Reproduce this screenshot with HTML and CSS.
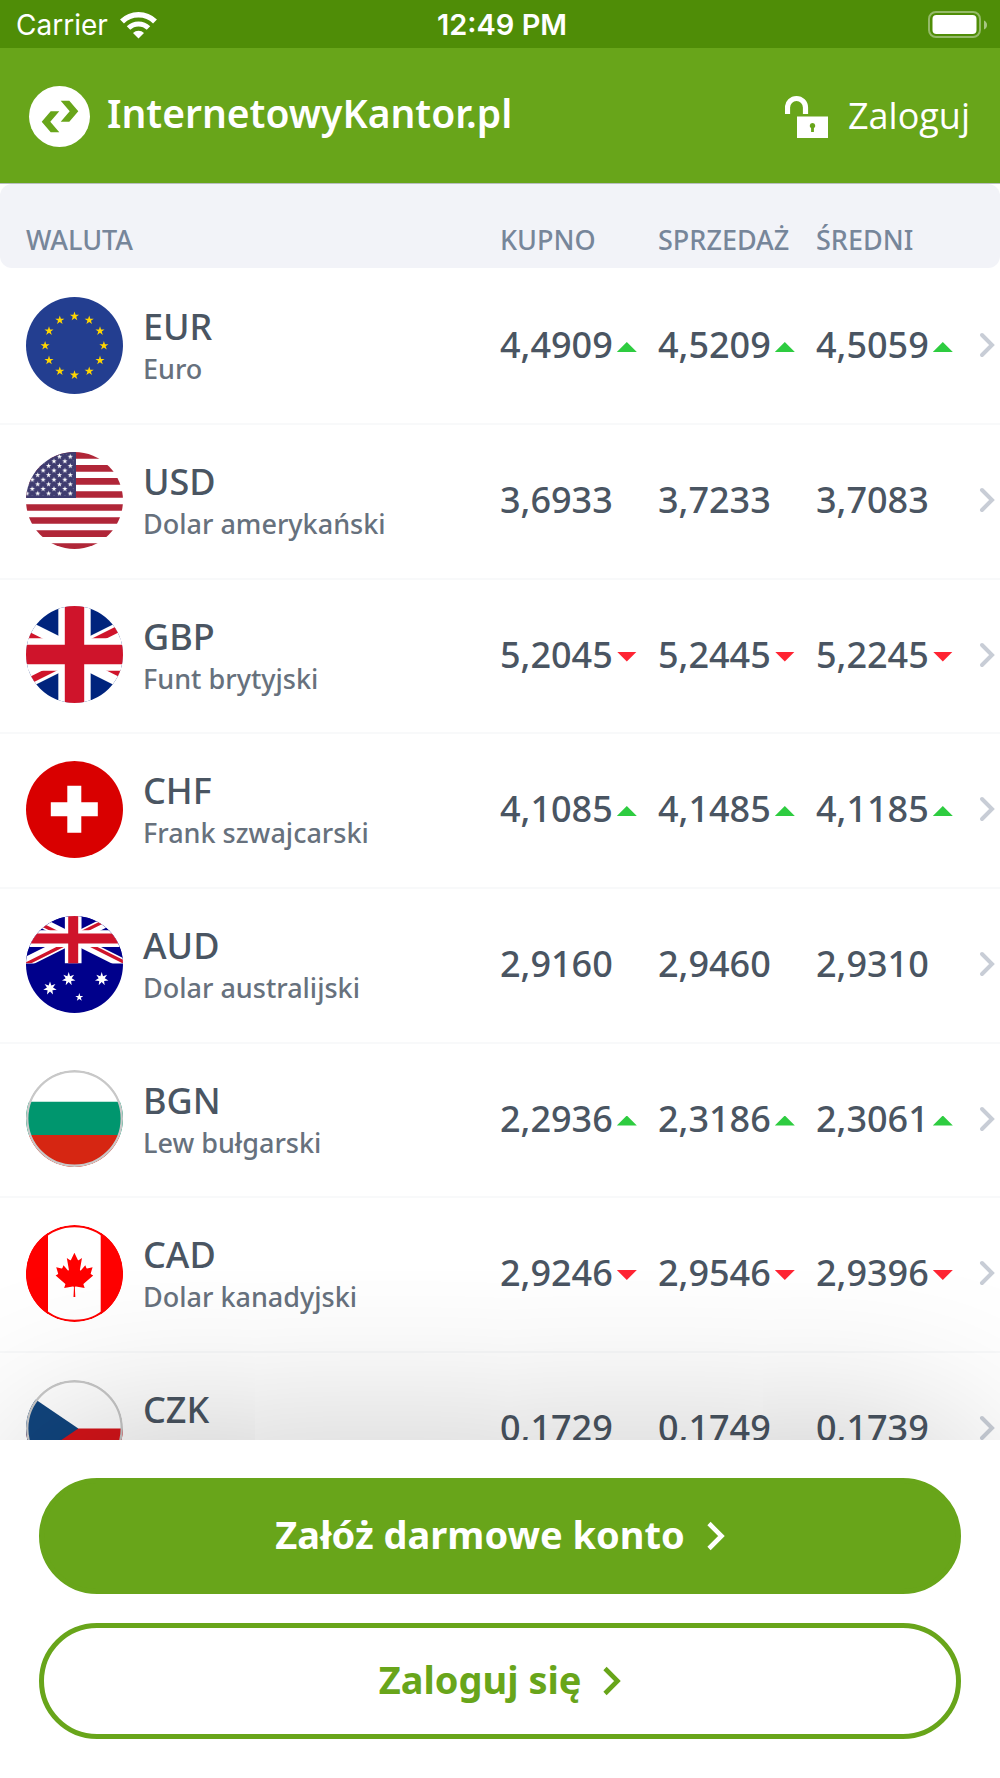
FILE: index.html
```html
<!DOCTYPE html>
<html lang="pl">
<head>
<meta charset="utf-8">
<meta name="viewport" content="width=device-width, initial-scale=1">
<title>InternetowyKantor.pl</title>
<link rel="stylesheet" href="styles.css">
</head>
<body>
<svg class="sprite" aria-hidden="true">
  <defs>
    <clipPath id="disc"><circle cx="48.500" cy="48.500" r="48.500"/></clipPath>
    <clipPath id="jack-quarters"><path d="M30 15h30v15zv15h-30zh-30v-15zv-15h30z"/></clipPath>
    <clipPath id="jack-box"><path d="M0 0h60v30H0z"/></clipPath>
    <path id="star5" d="M0-1 .225-.309 .951-.309 .363.118 .588.809 0 .382-.588.809-.363.118-.951-.309-.225-.309z"/>
    <path id="star7" d="M0-1 .195-.405 .782-.623 .439-.1 .975.223 .352.28 .434.901 0 .45-.434.901-.352.28-.975.223-.439-.1-.782-.623-.195-.405z"/>
    <pattern id="us-stars" patternUnits="userSpaceOnUse" x="38.87" y="0.07" width="10.86" height="9.2">
      <use href="#star5" fill="#fff" transform="translate(5.43 4.6) scale(2.8)"/>
      <use href="#star5" fill="#fff" transform="translate(0 0) scale(2.8)"/>
      <use href="#star5" fill="#fff" transform="translate(10.86 0) scale(2.8)"/>
      <use href="#star5" fill="#fff" transform="translate(0 9.2) scale(2.8)"/>
      <use href="#star5" fill="#fff" transform="translate(10.86 9.2) scale(2.8)"/>
    </pattern>
    <symbol id="jack" viewBox="0 0 60 30">
      <g clip-path="url(#jack-box)">
        <path d="M0 0h60v30H0z" fill="var(--jack-blue)"/>
        <path d="M0 0 60 30M60 0 0 30" stroke="#fff" stroke-width="6"/>
        <path d="M0 0 60 30M60 0 0 30" stroke="#cf142b" stroke-width="4" clip-path="url(#jack-quarters)"/>
        <path d="M30 0v30M0 15h60" stroke="#fff" stroke-width="10"/>
        <path d="M30 0v30M0 15h60" stroke="#cf142b" stroke-width="6"/>
      </g>
    </symbol>
    <symbol id="chevron" viewBox="0 0 16 26"><path d="M3 3l10 10L3 23" fill="none" stroke="currentColor" stroke-width="4" stroke-linecap="round" stroke-linejoin="miter"/></symbol>
    <symbol id="arrow" viewBox="0 0 18 30"><path d="M2 2.500l12.500 12.500L2 27.500" fill="none" stroke="currentColor" stroke-width="4.600"/></symbol>
  </defs>
</svg>

<div class="status">
  <div class="status-left">
    <span class="carrier">Carrier</span>
    <svg class="wifi" viewBox="0 0 37 28" fill="none" stroke="#fff">
      <path d="M2 10.500a23.500 23.500 0 0 1 33 0" stroke-width="5.500"/>
      <path d="M8.500 17a14.400 14.400 0 0 1 20 0" stroke-width="5"/>
      <path d="M18.500 27.500l-5.500-5.500a8 8 0 0 1 11 0z" fill="#fff" stroke="none"/>
    </svg>
  </div>
  <span class="clock">12:49 PM</span>
  <div class="status-right">
    <svg class="battery" viewBox="0 0 60 28">
      <rect x="1" y="1" width="51" height="25" rx="7" fill="none" stroke="#fff" stroke-opacity=".4" stroke-width="2"/>
      <rect x="4.500" y="4" width="44" height="19" rx="4" fill="#fff"/>
      <path d="M56 9.500q3 1.500 3 4.500t-3 4.500z" fill="#fff" fill-opacity=".5"/>
    </svg>
  </div>
</div>

<header class="header">
  <a class="brand" href="#">
    <svg class="brand-mark" viewBox="0 0 61 61">
      <circle cx="30.500" cy="30.500" r="30.500" fill="#fff"/>
      <path d="M31.700 14.700h8.600l9 10.500-9 10.500h-8.600l9-10.500zM30.300 25.300h-8.600L12.700 35.800l9 10.500h8.600l-9-10.500z" fill="#68a51a"/>
    </svg>
    <span class="brand-name">InternetowyKantor.pl</span>
  </a>
  <a class="login" href="#">
    <svg class="lock" viewBox="0 0 43 43">
      <path d="M2.500 19V12.500a9 9 0 0 1 18 0V19" fill="none" stroke="#fff" stroke-width="5.200"/>
      <path fill="#fff" fill-rule="evenodd" d="M12 21.500h31V43H12zM27.500 28a2.800 2.800 0 0 0-1.400 5.200V37h2.800v-3.800A2.800 2.800 0 0 0 27.500 28z"/>
    </svg>
    <span>Zaloguj</span>
  </a>
</header>

<main class="rates-panel">
  <table class="rates">
    <thead>
      <tr><th class="name-col" scope="col">WALUTA</th><th class="rate-col" scope="col">KUPNO</th><th class="rate-col" scope="col">SPRZEDAŻ</th><th class="rate-col" scope="col">ŚREDNI</th><th class="more-col"></th></tr>
    </thead>
    <tbody>
      <tr>
        <td><div class="currency">
          <svg class="flag" viewBox="0 0 97 97">
            <circle cx="48.500" cy="48.500" r="48.500" fill="#233e90"/>
            <g fill="#ffd500">
              <use href="#star5" transform="translate(48.500 19.300) scale(4.800)"/><use href="#star5" transform="translate(63.200 23.200) scale(4.800)"/>
              <use href="#star5" transform="translate(74 34) scale(4.800)"/><use href="#star5" transform="translate(77.900 48.700) scale(4.800)"/>
              <use href="#star5" transform="translate(74 63.400) scale(4.800)"/><use href="#star5" transform="translate(63.200 74.200) scale(4.800)"/>
              <use href="#star5" transform="translate(48.500 78.100) scale(4.800)"/><use href="#star5" transform="translate(33.800 74.200) scale(4.800)"/>
              <use href="#star5" transform="translate(23 63.400) scale(4.800)"/><use href="#star5" transform="translate(19.100 48.700) scale(4.800)"/>
              <use href="#star5" transform="translate(23 34) scale(4.800)"/><use href="#star5" transform="translate(33.800 23.200) scale(4.800)"/>
            </g>
          </svg>
          <div class="label"><div class="code">EUR</div><div class="name">Euro</div></div>
        </div></td>
        <td><span class="rate up">4,4909</span></td><td><span class="rate up">4,5209</span></td><td><span class="rate up">4,5059</span></td>
        <td><svg class="more"><use href="#chevron"/></svg></td>
      </tr>
      <tr>
        <td><div class="currency">
          <svg class="flag" viewBox="0 0 97 97"><g clip-path="url(#disc)">
            <path d="M0 0h97v97H0z" fill="#fff"/>
            <path d="M0 3.300h97M0 16.300h97M0 29.300h97M0 42.500h97M0 55.500h97M0 68.500h97M0 81.600h97M0 94.700h97" stroke="#b02638" stroke-width="6.700"/>
            <path d="M0 0h50v46H0z" fill="#3f3c70"/>
            <path d="M0 2h47.500v42H0z" fill="url(#us-stars)"/>
          </g></svg>
          <div class="label"><div class="code">USD</div><div class="name">Dolar amerykański</div></div>
        </div></td>
        <td><span class="rate">3,6933</span></td><td><span class="rate">3,7233</span></td><td><span class="rate">3,7083</span></td>
        <td><svg class="more"><use href="#chevron"/></svg></td>
      </tr>
      <tr>
        <td><div class="currency">
          <svg class="flag jack-gb" viewBox="0 0 97 97"><g clip-path="url(#disc)"><use href="#jack" x="-48.500" y="0" width="194" height="97"/></g></svg>
          <div class="label"><div class="code">GBP</div><div class="name">Funt brytyjski</div></div>
        </div></td>
        <td><span class="rate down">5,2045</span></td><td><span class="rate down">5,2445</span></td><td><span class="rate down">5,2245</span></td>
        <td><svg class="more"><use href="#chevron"/></svg></td>
      </tr>
      <tr>
        <td><div class="currency">
          <svg class="flag" viewBox="0 0 97 97"><circle cx="48.500" cy="48.500" r="48.500" fill="#d90000"/><path d="M48.300 24.700v47M24.800 48.200h47" stroke="#fff" stroke-width="14"/></svg>
          <div class="label"><div class="code">CHF</div><div class="name">Frank szwajcarski</div></div>
        </div></td>
        <td><span class="rate up">4,1085</span></td><td><span class="rate up">4,1485</span></td><td><span class="rate up">4,1185</span></td>
        <td><svg class="more"><use href="#chevron"/></svg></td>
      </tr>
      <tr>
        <td><div class="currency">
          <svg class="flag jack-au" viewBox="0 0 97 97"><g clip-path="url(#disc)">
            <path d="M0 0h97v97H0z" fill="#00008b"/>
            <use href="#jack" x="-2.800" y="-2.400" width="100" height="50"/>
            <g fill="#fff">
              <use href="#star7" transform="translate(24 72.300) scale(6.900)"/><use href="#star7" transform="translate(42.700 63) scale(6.900)"/>
              <use href="#star7" transform="translate(75.700 63) scale(6.900)"/><use href="#star5" transform="translate(53.300 81.300) scale(4.200)"/>
            </g>
          </g></svg>
          <div class="label"><div class="code">AUD</div><div class="name">Dolar australijski</div></div>
        </div></td>
        <td><span class="rate">2,9160</span></td><td><span class="rate">2,9460</span></td><td><span class="rate">2,9310</span></td>
        <td><svg class="more"><use href="#chevron"/></svg></td>
      </tr>
      <tr>
        <td><div class="currency">
          <svg class="flag" viewBox="0 0 97 97"><g clip-path="url(#disc)">
            <path d="M0 0h97v97H0z" fill="#fff"/><path d="M0 31.700h97V65H0z" fill="#00966e"/><path d="M0 65h97v32H0z" fill="#d62612"/>
            <circle cx="48.500" cy="48.500" r="47.300" fill="none" stroke="#c8c8c8" stroke-width="2.400"/>
          </g></svg>
          <div class="label"><div class="code">BGN</div><div class="name">Lew bułgarski</div></div>
        </div></td>
        <td><span class="rate up">2,2936</span></td><td><span class="rate up">2,3186</span></td><td><span class="rate up">2,3061</span></td>
        <td><svg class="more"><use href="#chevron"/></svg></td>
      </tr>
      <tr>
        <td><div class="currency">
          <svg class="flag" viewBox="0 0 97 97"><g clip-path="url(#disc)">
            <path d="M0 0h97v97H0z" fill="#fff"/><path d="M0 0h22v97H0zM74.700 0H97v97H74.700z" fill="#f00"/>
            <circle cx="48.500" cy="48.500" r="47.400" fill="none" stroke="#f00" stroke-width="2.200"/>
            <path fill="#f00" transform="translate(48.400 49.700) scale(.0101 .011)" d="m-90 2030 45-863a95 95 0 0 0-111-98l-859 151 116-320a65 65 0 0 0-20-73l-941-762 212-99a65 65 0 0 0 34-79l-186-572 542 115a65 65 0 0 0 73-38l105-247 423 454a65 65 0 0 0 111-57l-204-1052 327 189a65 65 0 0 0 91-27l332-652 332 652a65 65 0 0 0 91 27l327-189-204 1052a65 65 0 0 0 111 57l423-454 105 247a65 65 0 0 0 73 38l542-115-186 572a65 65 0 0 0 34 79l212 99-941 762a65 65 0 0 0-20 73l116 320-859-151a95 95 0 0 0-111 98l45 863z"/>
          </g></svg>
          <div class="label"><div class="code">CAD</div><div class="name">Dolar kanadyjski</div></div>
        </div></td>
        <td><span class="rate down">2,9246</span></td><td><span class="rate down">2,9546</span></td><td><span class="rate down">2,9396</span></td>
        <td><svg class="more"><use href="#chevron"/></svg></td>
      </tr>
      <tr>
        <td><div class="currency">
          <svg class="flag" viewBox="0 0 97 97"><g clip-path="url(#disc)">
            <path d="M0 0h97v97H0z" fill="#fff"/><path d="M0 48.500h97V97H0z" fill="#d7141a"/><path d="M0 13l52.300 35.500L0 84z" fill="#11457e"/>
            <circle cx="48.500" cy="48.500" r="47.300" fill="none" stroke="#c8c8c8" stroke-width="2.400"/>
          </g></svg>
          <div class="label"><div class="code">CZK</div><div class="name">Korona czeska</div></div>
        </div></td>
        <td><span class="rate">0,1729</span></td><td><span class="rate">0,1749</span></td><td><span class="rate">0,1739</span></td>
        <td><svg class="more"><use href="#chevron"/></svg></td>
      </tr>
    </tbody>
  </table>
</main>

<footer class="actions">
  <button class="btn btn-primary" type="button">Załóż darmowe konto <svg class="btn-arrow"><use href="#arrow"/></svg></button>
  <button class="btn btn-outline" type="button">Zaloguj się <svg class="btn-arrow"><use href="#arrow"/></svg></button>
</footer>
</body>
</html>
```
FILE: styles.css
```css
* { box-sizing: border-box; }

:root {
  --green: #68a51a;
  --green-dark: #4f8d07;
  --ink: #4a5562;
  --muted: #67717d;
}

body {
  margin: 0;
  height: 100vh;
  display: flex;
  flex-direction: column;
  overflow: hidden;
  background: #fff;
  color: var(--ink);
  font-family: "Noto Sans", "Open Sans", sans-serif;
}

svg { display: block; flex: none; }
.sprite { position: absolute; width: 0; height: 0; }

/* Status bar */
.status {
  flex: none;
  height: 48px;
  padding: 2px 12px 0 16px;
  display: grid;
  grid-template-columns: 1fr auto 1fr;
  align-items: center;
  background: var(--green-dark);
  color: #fff;
  font-family: Inter, "Liberation Sans", sans-serif;
  font-size: 28px;
  line-height: 32px;
}
.status-left { display: flex; align-items: center; gap: 12px; }
.status-right { display: flex; justify-content: flex-end; }
.clock { font-size: 29px; font-weight: 600; }
.wifi { width: 37px; height: 28px; }
.battery { width: 60px; height: 28px; }

/* Header */
.header {
  flex: none;
  height: 136px;
  padding: 1px 30px 0 29px;
  display: flex;
  align-items: center;
  justify-content: space-between;
  background: var(--green);
  border-bottom: 1px solid #b9bfc0;
}
.brand, .login { display: flex; align-items: center; color: #fff; text-decoration: none; }
.brand { gap: 17px; }
.brand-mark { width: 61px; height: 61px; }
.brand-name { padding-bottom: 6px; font-size: 39px; font-weight: 600; line-height: 56px; }
.login { gap: 20px; font-family: "Open Sans", "Noto Sans", sans-serif; font-size: 36px; line-height: 48px; }
.lock { width: 43px; height: 43px; }

/* Rates */
.rates-panel { flex: 1; min-height: 0; overflow-y: auto; scrollbar-width: none; }
.rates { width: 100%; table-layout: fixed; border-collapse: separate; border-spacing: 0; }
.rates th {
  height: 84px;
  padding: 28px 0 0;
  background: #f2f3f8;
  color: #77869a;
  font-size: 27px;
  font-weight: 500;
  line-height: 32px;
  text-align: left;
}
.rates th:first-child { padding-left: 26px; border-radius: 12px 0 0 12px; }
.rates th:last-child { border-radius: 0 12px 12px 0; }
.name-col { width: 50%; }
.rate-col { width: 158px; }
.rates td { height: 155px; padding: 0 0 3px; border-top: 2px solid #f8f9fa; vertical-align: middle; }
.rates tbody tr:first-child td { border-top-color: transparent; }
.rates tr:nth-child(3n) td { height: 154px; }
.rates td:first-child { padding-left: 26px; }

.currency { display: flex; align-items: center; gap: 20px; }
.flag { width: 97px; height: 97px; }
.jack-gb { --jack-blue: #00247d; }
.jack-au { --jack-blue: #00008b; }
.label { padding-top: 4px; }
.code { font-size: 36px; font-weight: 500; line-height: 44px; }
.name { color: var(--muted); font-size: 27px; font-weight: 500; line-height: 40px; }

.rate { display: flex; align-items: center; gap: 4px; font-size: 36px; font-weight: 500; line-height: 48px; }
.rate::after { width: 20px; height: 10px; margin-top: 4px; }
.up::after { content: ""; background: #2ecc40; clip-path: polygon(50% 0, 100% 100%, 0 100%); }
.down::after { content: ""; background: #ff2433; clip-path: polygon(0 0, 100% 0, 50% 100%); }
.more { width: 16px; height: 26px; margin-left: auto; margin-right: 5px; color: #c8cdd6; }

/* Bottom actions */
.actions {
  position: relative;
  flex: none;
  padding: 38px 39px 39px;
  display: flex;
  flex-direction: column;
  gap: 29px;
  background: #fff;
  box-shadow: 0 -30px 180px -30px rgba(0, 0, 0, .24);
}
.btn {
  display: flex;
  align-items: center;
  justify-content: center;
  gap: 22px;
  width: 100%;
  height: 116px;
  padding: 0 0 4px;
  border: 5px solid var(--green);
  border-radius: 58px;
  font: 700 38px/52px "Noto Sans", "Open Sans", sans-serif;
}
.btn-primary { background: var(--green); color: #fff; }
.btn-outline { background: #fff; color: var(--green); }
.btn-arrow { width: 18px; height: 30px; margin-top: 4px; }
```
